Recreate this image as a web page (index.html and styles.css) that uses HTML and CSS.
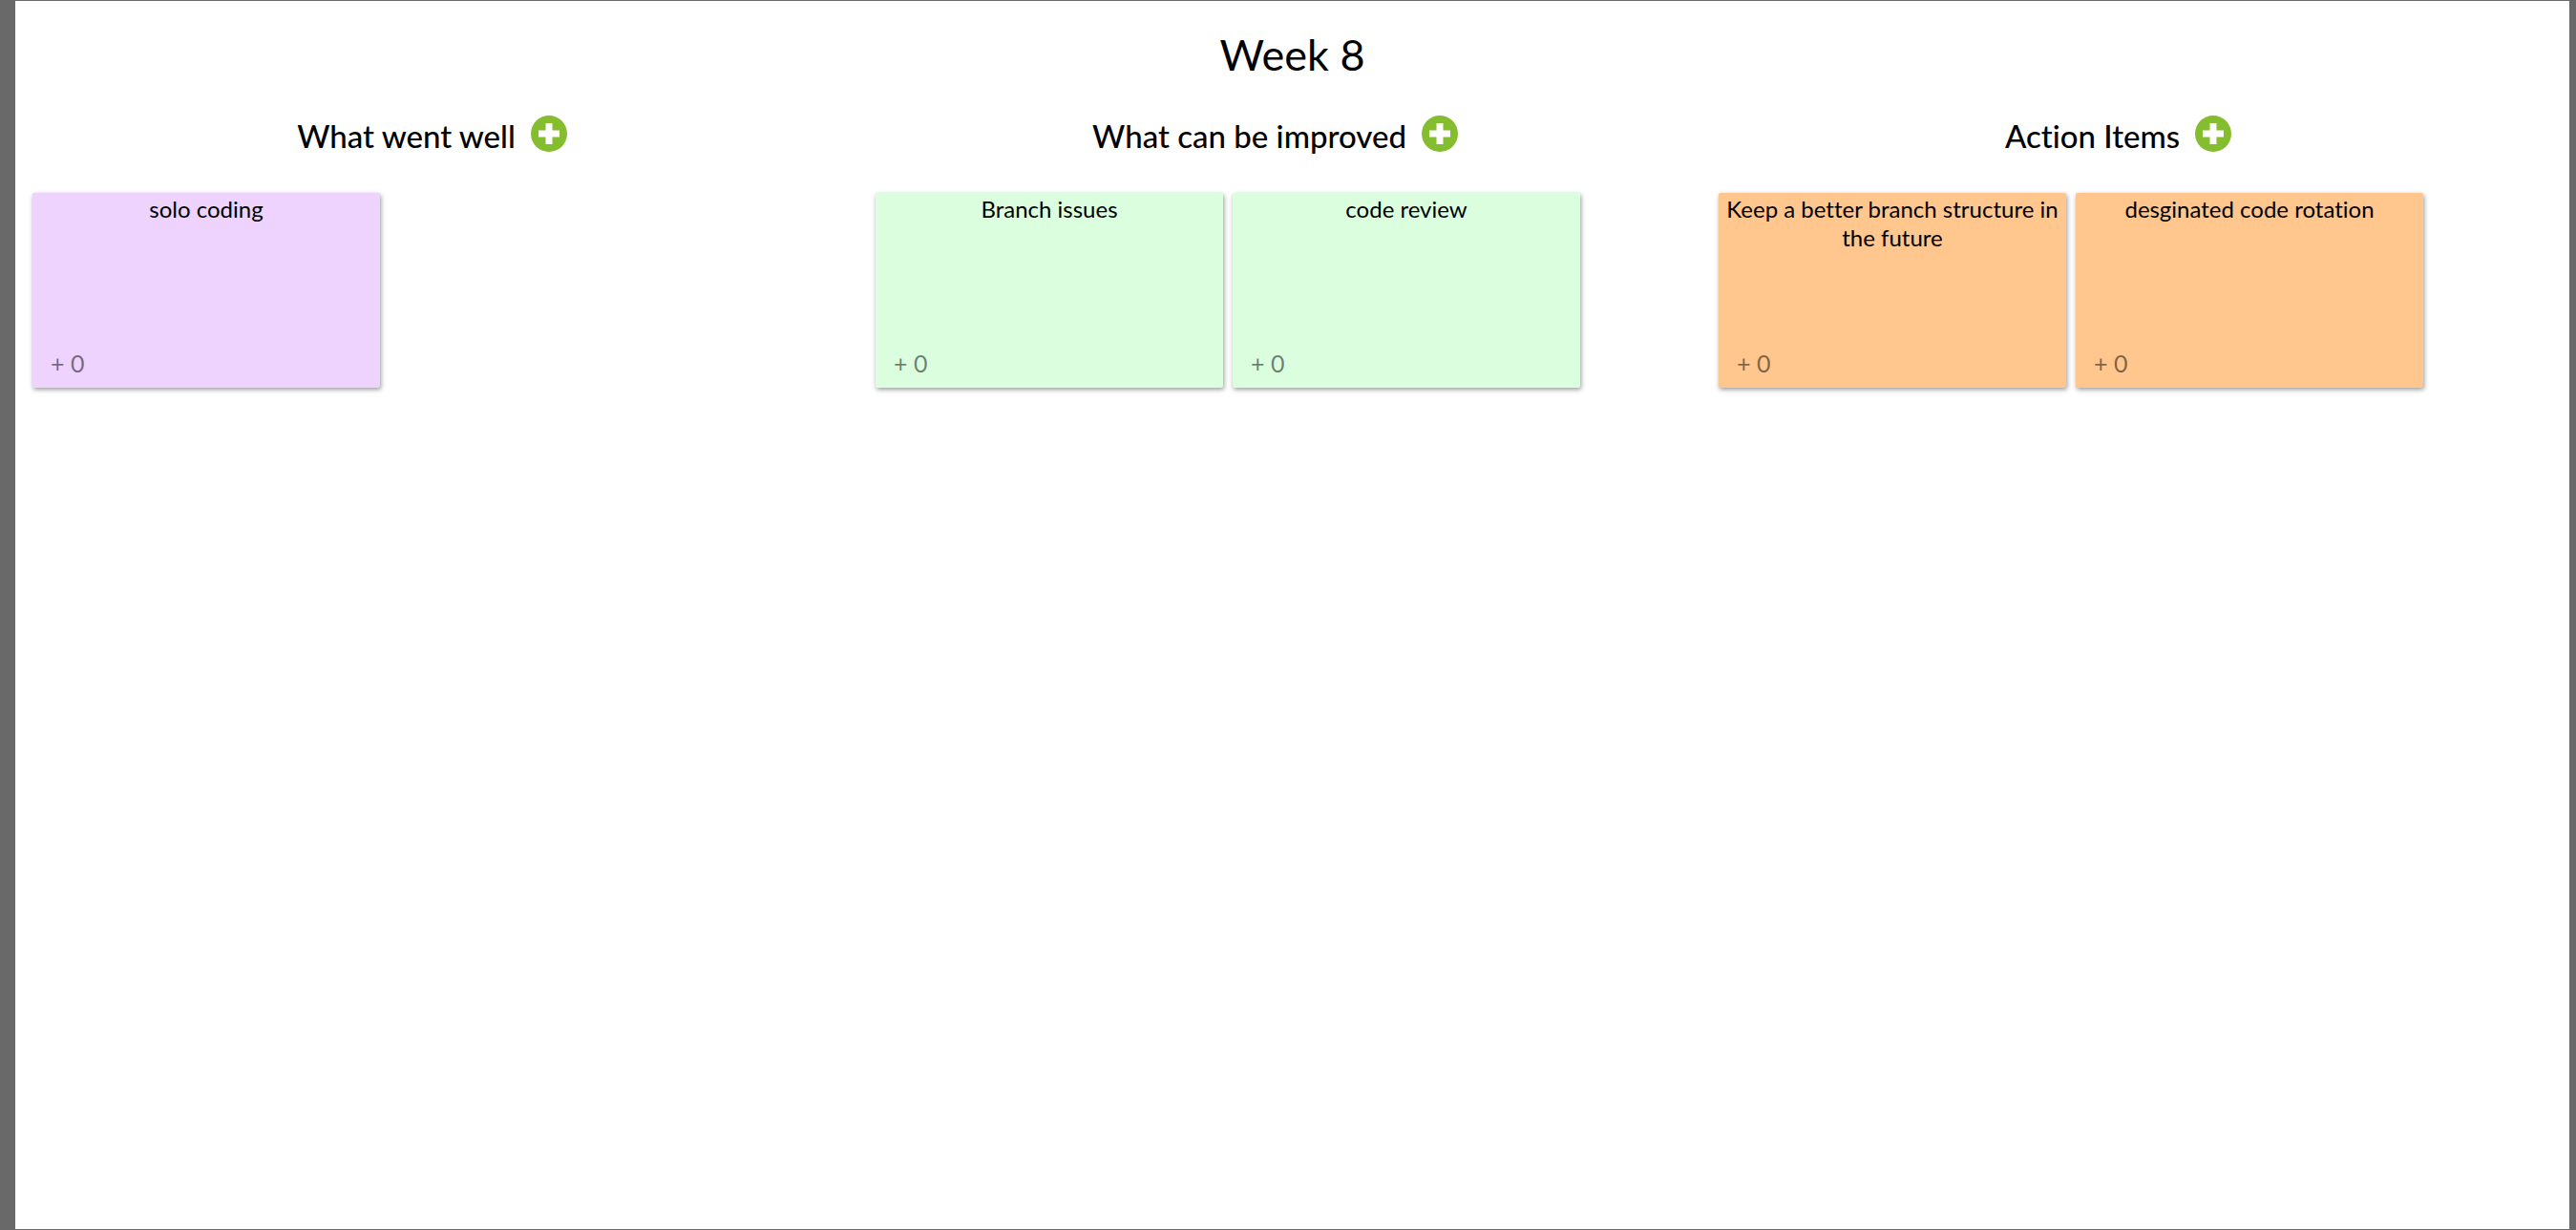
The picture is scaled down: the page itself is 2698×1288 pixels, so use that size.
FILE: index.html
```html
<!DOCTYPE html>
<html lang="en">
<head>
<meta charset="utf-8">
<title>Week 8</title>
<link rel="stylesheet" href="styles.css">
</head>
<body>
<main class="board">
  <h1 class="board-title">Week 8</h1>
  <div class="columns">
    <section class="column">
      <header class="column-header">
        <h2 class="column-title">What went well</h2>
        <button class="add" type="button" aria-label="Add to What went well"><svg viewBox="0 0 38 38" aria-hidden="true"><circle cx="19" cy="19" r="19"/><path d="M19 8v22M8 19h22"/></svg></button>
      </header>
      <div class="notes">
        <article class="note purple"><p class="note-text">solo coding</p><button class="vote" type="button">+ 0</button></article>
      </div>
    </section>
    <section class="column">
      <header class="column-header">
        <h2 class="column-title">What can be improved</h2>
        <button class="add" type="button" aria-label="Add to What can be improved"><svg viewBox="0 0 38 38" aria-hidden="true"><circle cx="19" cy="19" r="19"/><path d="M19 8v22M8 19h22"/></svg></button>
      </header>
      <div class="notes">
        <article class="note green"><p class="note-text">Branch issues</p><button class="vote" type="button">+ 0</button></article>
        <article class="note green"><p class="note-text">code review</p><button class="vote" type="button">+ 0</button></article>
      </div>
    </section>
    <section class="column">
      <header class="column-header">
        <h2 class="column-title">Action Items</h2>
        <button class="add" type="button" aria-label="Add to Action Items"><svg viewBox="0 0 38 38" aria-hidden="true"><circle cx="19" cy="19" r="19"/><path d="M19 8v22M8 19h22"/></svg></button>
      </header>
      <div class="notes">
        <article class="note orange"><p class="note-text">Keep a better branch structure in the future</p><button class="vote" type="button">+ 0</button></article>
        <article class="note orange"><p class="note-text">desginated code rotation</p><button class="vote" type="button">+ 0</button></article>
      </div>
    </section>
  </div>
</main>
</body>
</html>
```
FILE: styles.css
```css
* {
  box-sizing: border-box;
}

body {
  margin: 0;
  font-family: Lato, "Open Sans", sans-serif;
  font-variant-ligatures: none;
  color: #000;
  background: #fff;
}

.board {
  min-height: 100vh;
  padding: 26px 13px;
  border: solid #696969;
  border-width: 1px 7px 1px 16px;
}

.board-title {
  margin: 0;
  font-size: 45px;
  font-weight: 400;
  line-height: 60px;
  text-align: center;
}

.columns {
  display: grid;
  grid-template-columns: repeat(3, 1fr);
}

.column-header {
  display: flex;
  align-items: center;
  justify-content: center;
  gap: 16px;
  height: 110px;
  padding: 0 36px 4px 0;
}

.column-title {
  margin: 0;
  padding-top: 3px;
  font-size: 33px;
  font-weight: 500;
  line-height: 48px;
}

.add {
  width: 38px;
  height: 38px;
  padding: 0;
  border: 0;
  background: none;
  cursor: pointer;
}

.add svg {
  display: block;
  fill: #84bd2d;
}

.add path {
  stroke: #fff;
  stroke-width: 7;
}

.notes {
  display: flex;
  flex-wrap: wrap;
  gap: 10px;
  padding: 5px;
}

.note {
  display: flex;
  flex-direction: column;
  justify-content: space-between;
  align-items: flex-start;
  width: 364px;
  min-height: 204px;
  padding: 2px 3px 8px;
  border-radius: 2px;
  box-shadow: 1px 2px 5px rgba(0, 0, 0, 0.4);
}

.note-text {
  align-self: stretch;
  margin: 0;
  font-size: 24px;
  line-height: 30px;
  text-align: center;
}

.vote {
  padding: 0 16px;
  border: 0;
  background: none;
  font: inherit;
  font-size: 25px;
  line-height: 36px;
  color: rgba(0, 0, 0, 0.5);
  cursor: pointer;
}

.purple {
  background: #edd3fd;
}

.green {
  background: #dbffde;
}

.orange {
  background: #ffc68e;
}
```
